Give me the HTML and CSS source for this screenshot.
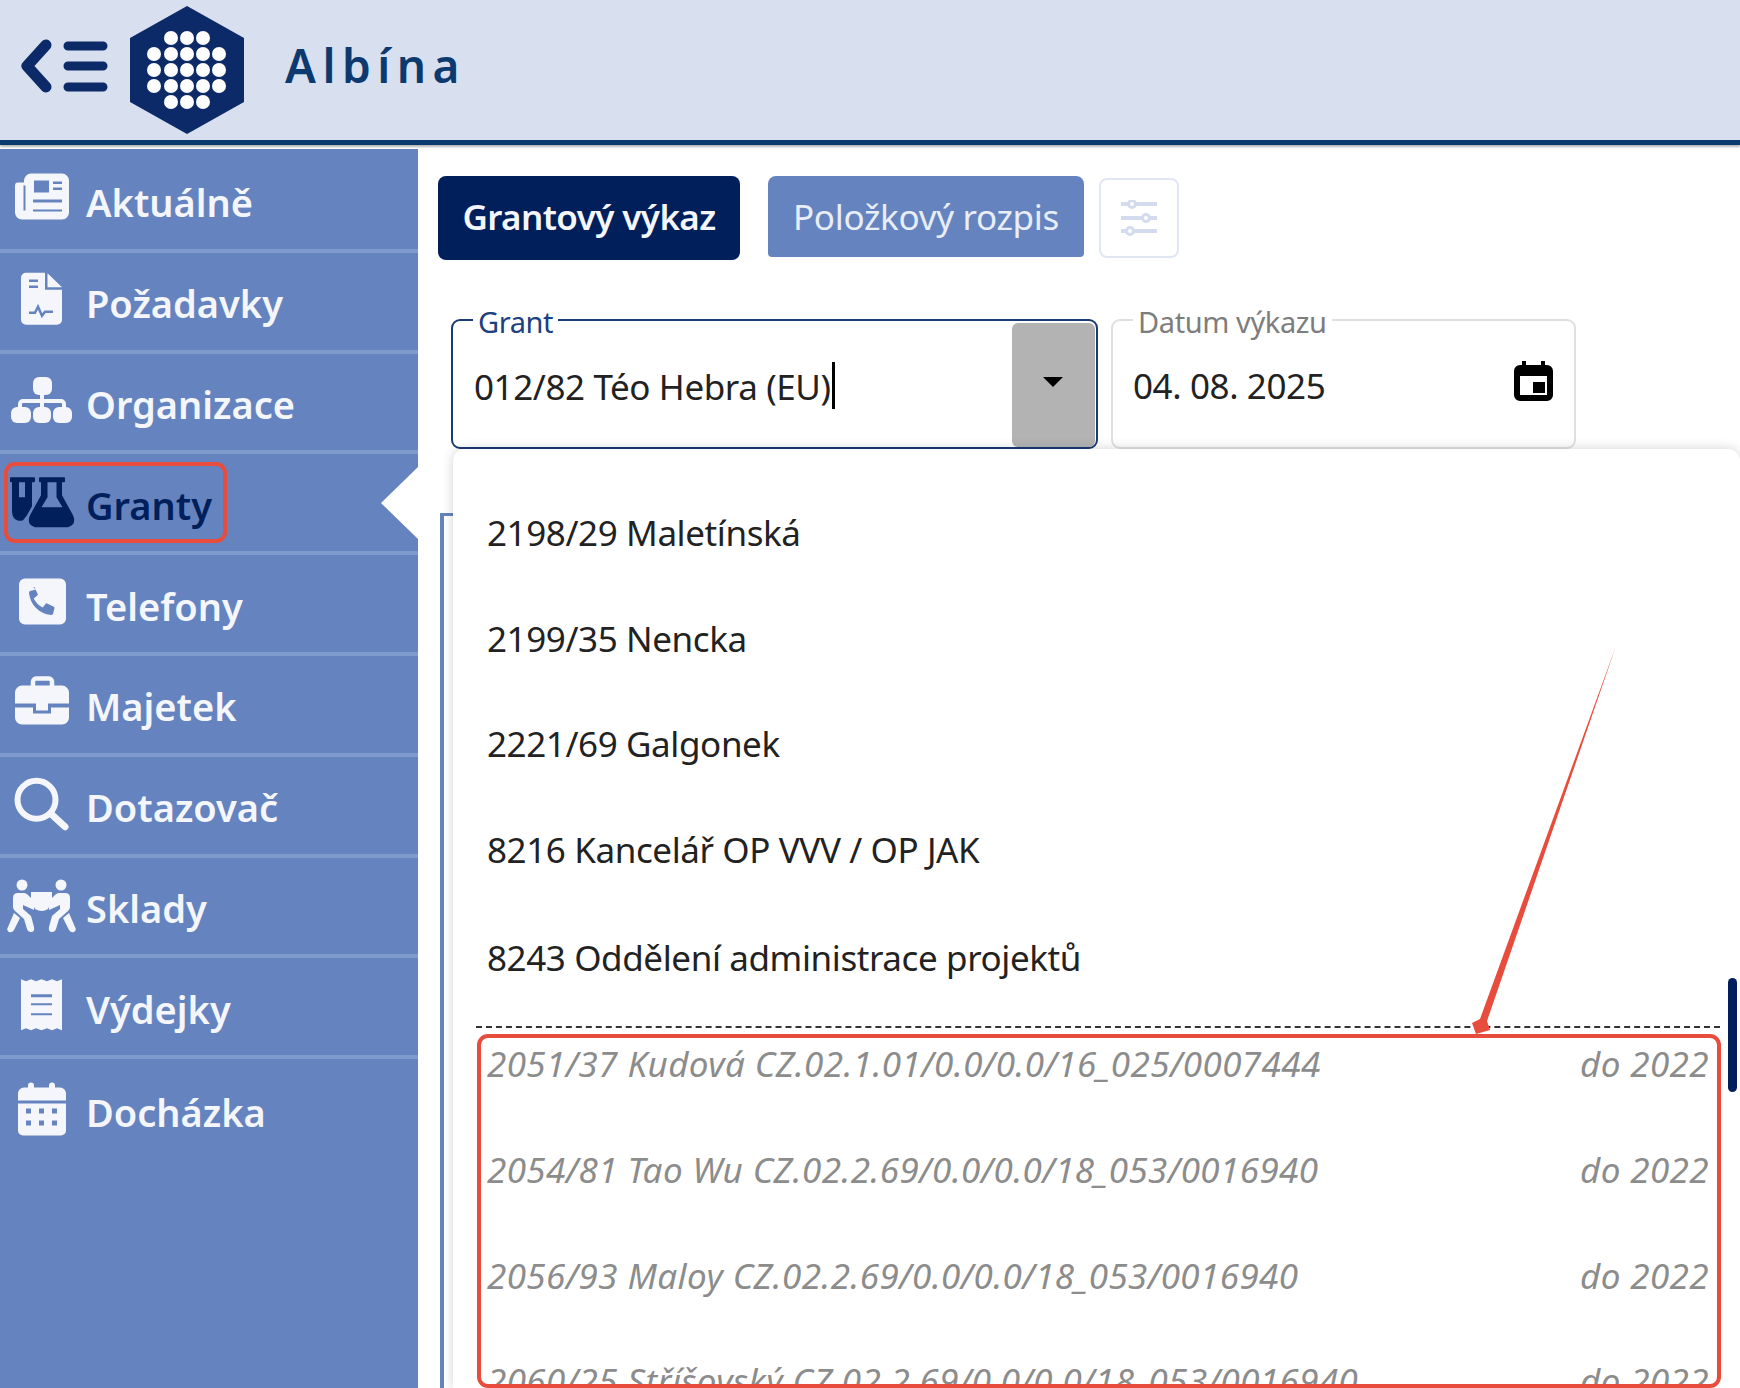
FILE: index.html
```html
<!DOCTYPE html>
<html lang="cs">
<head>
<meta charset="utf-8">
<title>Albína</title>
<link rel="stylesheet" href="styles.css">
</head>
<body>
<header class="topbar">
  <svg class="brand-menu" viewBox="0 0 110 140" aria-hidden="true">
    <path d="M46 45 27 66l19 21" class="brand-stroke chevron"/>
    <path d="M68 46h35M68 66h35M68 87h35" class="brand-stroke"/>
  </svg>
  <svg class="brand-logo" viewBox="130 0 114 140" aria-hidden="true">
    <path class="hex" d="M187 6 244 38v64l-57 32-57-32V38z"/>
    <g class="hex-dots">
      <circle cx="171" cy="38" r="7"/><circle cx="187" cy="38" r="7"/><circle cx="203" cy="38" r="7"/>
      <circle cx="154" cy="54" r="7"/><circle cx="171" cy="54" r="7"/><circle cx="187" cy="54" r="7"/><circle cx="203" cy="54" r="7"/><circle cx="219" cy="54" r="7"/>
      <circle cx="154" cy="70" r="7"/><circle cx="171" cy="70" r="7"/><circle cx="187" cy="70" r="7"/><circle cx="203" cy="70" r="7"/><circle cx="219" cy="70" r="7"/>
      <circle cx="154" cy="86" r="7"/><circle cx="171" cy="86" r="7"/><circle cx="187" cy="86" r="7"/><circle cx="203" cy="86" r="7"/><circle cx="219" cy="86" r="7"/>
      <circle cx="171" cy="102" r="7"/><circle cx="187" cy="102" r="7"/><circle cx="203" cy="102" r="7"/>
    </g>
  </svg>
  <div class="brand-name">Albína</div>
</header>

<div class="layout">
  <nav class="sidebar">
    <a class="nav-row">
      <svg class="nav-icon" viewBox="0 170.400 84 60" aria-hidden="true">
        <path fill-rule="evenodd" d="M24 181a7 7 0 0 1 7-7h31a7 7 0 0 1 7 7v32a7 7 0 0 1-7 7H22a7 7 0 0 1-7-7v-27q0-3 3-3h6zM34 181v12h15v-12zM53 182v2.500h9V182zM53 188v2.500h9V188zM33 200v3h29v-3zM33 210v2h29v-2zM23.500 186v25h2v-25z"/>
      </svg>
      <span class="nav-label">Aktuálně</span>
    </a>
    <a class="nav-row">
      <svg class="nav-icon" viewBox="0 271.200 84 60" aria-hidden="true">
        <path d="M26 273h19v17h17v30a5 5 0 0 1-5 5H26a5 5 0 0 1-5-5v-42a5 5 0 0 1 5-5zM47.500 273.500 62 287.500H47.500z"/>
        <path class="cut-line" d="M29 281h9M29 287h9M29 313h6l3-6 4 9 3-4h8"/>
      </svg>
      <span class="nav-label">Požadavky</span>
    </a>
    <a class="nav-row">
      <svg class="nav-icon" viewBox="0 372 84 60" aria-hidden="true">
        <rect x="33" y="377" width="19" height="18" rx="6"/>
        <rect x="11" y="407" width="20" height="16" rx="6"/>
        <rect x="33" y="407" width="18" height="16" rx="6"/>
        <rect x="53" y="407" width="19" height="16" rx="6"/>
        <path d="M40 392h4v7h17a5 5 0 0 1 5 5v4h-4v-4q0-1-1-1H44v5h-4v-5H23q-1 0-1 1v4h-4v-4a5 5 0 0 1 5-5h17z"/>
      </svg>
      <span class="nav-label">Organizace</span>
    </a>
    <a class="nav-row is-current">
      <svg class="nav-icon" viewBox="0 472.800 84 60" aria-hidden="true">
        <path fill-rule="evenodd" d="M11 477h23a1 1 0 0 1 1 1v3a1 1 0 0 1-1 1h-2v24l-5 9-4 5q-3 1-6 0-5-2-5-9v-29h-1a1 1 0 0 1-1-1v-3a1 1 0 0 1 1-1zM19 482v15h6v-15z"/>
        <path fill-rule="evenodd" d="M41 477h23a1 1 0 0 1 1 1v3a1 1 0 0 1-1 1h-2v13l11 20q4 9-5 12H35q-9-3-5-12l11-20v-13h-1a1 1 0 0 1-1-1v-3a1 1 0 0 1 1-1zM47.500 482v15l-6 10h21l-6-10v-15z"/>
      </svg>
      <span class="nav-label">Granty</span>
    </a>
    <a class="nav-row">
      <svg class="nav-icon" viewBox="0 573.600 84 60" aria-hidden="true">
        <path fill-rule="evenodd" d="M25 578h35a6 6 0 0 1 6 6v34a6 6 0 0 1-6 6H25a6 6 0 0 1-6-6v-34a6 6 0 0 1 6-6zM36 589l-6 1.500q-1 .500-1 2 1 9 7 15t15 7q1.500 0 2-1l1.500-6q0-1-1-1.500l-6.500-3q-1-.400-1.500.500l-2.800 3.500q-6-3-9-9l3.500-2.800q.900-.500.500-1.500l-3-6.500q-.500-1-1.500-.200z"/>
      </svg>
      <span class="nav-label">Telefony</span>
    </a>
    <a class="nav-row">
      <svg class="nav-icon" viewBox="0 674.400 84 60" aria-hidden="true">
        <path class="handle" d="M33 688v-6a3 3 0 0 1 3-3h13a3 3 0 0 1 3 3v6"/>
        <path d="M22 686h40a7 7 0 0 1 7 7v11H48v7H36v-7H15v-11a7 7 0 0 1 7-7z"/>
        <path d="M15 708h18v6h18v-6h18v10a7 7 0 0 1-7 7H22a7 7 0 0 1-7-7z"/>
      </svg>
      <span class="nav-label">Majetek</span>
    </a>
    <a class="nav-row">
      <svg class="nav-icon" viewBox="0 775.200 84 60" aria-hidden="true">
        <circle class="lens" cx="36.500" cy="800" r="19"/>
        <path class="lens-handle" d="M52 815l13 12"/>
      </svg>
      <span class="nav-label">Dotazovač</span>
    </a>
    <a class="nav-row">
      <svg class="nav-icon" viewBox="0 876 84 60" aria-hidden="true">
        <g id="carrier">
          <circle cx="22" cy="885" r="5.500"/>
          <path d="M13 898q0-5 5-5h6q2 0 4 2l6 6v9l-11-5v4l8 7 3 11q1 5-3 5-3 0-4-3l-3-10-9-8q-2-2-2-4z"/>
          <path d="M14 913l6 5-6 12q-2 3-5 2-3-2-1-5z"/>
        </g>
        <use href="#carrier" transform="translate(83 0) scale(-1 1)"/>
        <path d="M31 892h21v8l-4 9q-6 4-13 0l-4-9z"/>
      </svg>
      <span class="nav-label">Sklady</span>
    </a>
    <a class="nav-row">
      <svg class="nav-icon" viewBox="0 976.800 84 60" aria-hidden="true">
        <path fill-rule="evenodd" d="M21 979l5 2 5-2 5 2 5.500-2 5.500 2 5-2 5 2 5-2v51l-5-2-5 2-5-2-5.500 2-5.500-2-5 2-5-2-5 2zM31 994v3h21v-3zM31 1003v2h21v-2zM31 1013v2h21v-2z"/>
      </svg>
      <span class="nav-label">Výdejky</span>
    </a>
    <a class="nav-row">
      <svg class="nav-icon" viewBox="0 1077.600 84 60" aria-hidden="true">
        <path d="M28 1083q0-3 3-3t3 3v2h15v-2q0-3 3-3t3 3v2h5a6 6 0 0 1 6 6v7H18v-7a6 6 0 0 1 6-6h4z"/>
        <path fill-rule="evenodd" d="M18 1101h48v27a5 5 0 0 1-5 5H23a5 5 0 0 1-5-5zM26 1106v5h5v-5zM39 1106v5h5v-5zM52 1106v5h5v-5zM26 1118v5h5v-5zM39 1118v5h5v-5zM52 1118v5h5v-5z"/>
      </svg>
      <span class="nav-label">Docházka</span>
    </a>
  </nav>

  <main class="content">
    <div class="tabs">
      <button class="tab tab-active">Grantový výkaz</button>
      <button class="tab tab-idle">Položkový rozpis</button>
      <button class="tab-settings" aria-label="Nastavení">
        <svg viewBox="0 0 40 36" aria-hidden="true">
          <path d="M2 4h36M2 18h36M2 31h36"/>
          <circle cx="13" cy="4" r="3.500"/><circle cx="27" cy="18" r="3.500"/><circle cx="11" cy="31" r="3.500"/>
        </svg>
      </button>
    </div>
    <div class="fields">
      <div class="field field-grant">
        <span class="field-label">Grant</span>
        <div class="field-value">012/82 Téo Hebra (EU)<i class="caret-bar"></i></div>
        <div class="drop-button"><i class="drop-arrow"></i></div>
      </div>
      <div class="field field-date">
        <span class="field-label">Datum výkazu</span>
        <div class="field-value">04. 08. 2025</div>
        <svg class="date-icon" viewBox="0 0 39 40" aria-hidden="true">
          <path fill-rule="evenodd" d="M8 0h4v4h15V0h4v4h2a6 6 0 0 1 6 6v24a6 6 0 0 1-6 6H6a6 6 0 0 1-6-6V10a6 6 0 0 1 6-6h2zM6 15v19h27V15zM19 21h12v11H19z"/>
        </svg>
      </div>
    </div>
    <div class="report-edge"></div>
  </main>
</div>

<section class="dropdown">
  <ul class="options options-current">
    <li>2198/29 Maletínská</li>
    <li>2199/35 Nencka</li>
    <li>2221/69 Galgonek</li>
    <li>8216 Kancelář OP VVV / OP JAK</li>
    <li>8243 Oddělení administrace projektů</li>
  </ul>
  <div class="options-divider"></div>
  <ul class="options options-old">
    <li><span>2051/37 Kudová CZ.02.1.01/0.0/0.0/16_025/0007444</span><span>do 2022</span></li>
    <li><span>2054/81 Tao Wu CZ.02.2.69/0.0/0.0/18_053/0016940</span><span>do 2022</span></li>
    <li><span>2056/93 Maloy CZ.02.2.69/0.0/0.0/18_053/0016940</span><span>do 2022</span></li>
    <li><span>2060/25 Stříšovský CZ.02.2.69/0.0/0.0/18_053/0016940</span><span>do 2022</span></li>
  </ul>
  <div class="scroll-thumb"></div>
</section>

<div class="mark mark-nav"></div>
<div class="mark mark-list"></div>
<svg class="mark-arrow" viewBox="0 0 1740 1388" aria-hidden="true">
  <path d="M1616 646 1487 1021 1490 1030 1476 1034 1472 1023 1480 1019z"/>
</svg>
</body>
</html>
```
FILE: styles.css
```css
:root {
  --nav: #6584bf;
  --navy: #001f5b;
  --ui-font: "Noto Sans", "Open Sans", sans-serif;
}
* { box-sizing: border-box; }
html, body { margin: 0; height: 100%; }
body {
  position: relative;
  width: 1740px;
  height: 1388px;
  overflow: hidden;
  background: #fff;
  font-family: var(--ui-font);
  color: #222;
}

/* top bar */
.topbar {
  display: flex;
  align-items: flex-start;
  height: 145px;
  background: #d8dfee;
  border-bottom: 5px solid #0a3a6e;
  box-shadow: 0 2px 2px #b5b5b5;
}
.brand-menu { width: 110px; height: 140px; flex: none; }
.brand-stroke { fill: none; stroke: #0c2a68; stroke-width: 9; stroke-linecap: round; stroke-linejoin: round; }
.chevron { stroke-width: 11; }
.brand-logo { width: 114px; height: 140px; margin-left: 20px; flex: none; }
.hex { fill: #0c2a68; }
.hex-dots { fill: #fff; }
.brand-name {
  margin-left: 41px;
  line-height: 130px;
  font-size: 46px;
  font-weight: 600;
  letter-spacing: 6.500px;
  color: #0d3a6e;
}

/* layout */
.layout { display: flex; height: 1239px; margin-top: 4px; }

/* sidebar */
.sidebar {
  position: relative;
  width: 418px;
  flex: none;
  padding-top: 3px;
  background: var(--nav);
}
.nav-row {
  position: relative;
  display: flex;
  align-items: center;
  height: 100.800px;
  border-bottom: 4px solid #7f9acc;
  color: #f4f6fb;
}
.nav-row:last-child { border-bottom: 0; }
.nav-icon { width: 84px; height: 60px; flex: none; margin-right: 2px; fill: currentColor; }
.nav-label {
  padding-top: 4px;
  font-size: 38px;
  font-weight: 600;
  letter-spacing: 0;
}
.is-current { color: var(--navy); }
.is-current::after {
  content: "";
  position: absolute;
  right: 0;
  top: 13px;
  border-style: solid;
  border-width: 36px 37px 36px 0;
  border-color: transparent #fff transparent transparent;
}
.cut-line { fill: none; stroke: var(--nav); stroke-width: 2.500; }
.handle { fill: none; stroke: currentColor; stroke-width: 4.500; }
.lens { fill: none; stroke: currentColor; stroke-width: 6; }
.lens-handle { fill: none; stroke: currentColor; stroke-width: 7; stroke-linecap: round; }

/* content */
.content { position: relative; flex: 1; padding: 27px 0 0 20px; }
.tabs { display: flex; align-items: flex-start; }
.tab {
  border: 0;
  margin: 0;
  padding: 0;
  border-radius: 8px;
  font-family: var(--ui-font);
  font-size: 35px;
  letter-spacing: -.6px;
}
.tab-active { width: 302px; height: 84px; padding-bottom: 4px; background: var(--navy); color: #f4f6fb; font-weight: 600; }
.tab-idle { width: 316px; height: 81px; margin-left: 28px; background: var(--nav); color: #e8edf6; border-radius: 8px 8px 4px 4px; letter-spacing: -.3px; }
.tab-settings {
  width: 80px;
  height: 80px;
  margin: 2px 0 0 15px;
  padding: 0;
  background: #fff;
  border: 2px solid #e0e7f3;
  border-radius: 8px;
  display: flex;
  align-items: center;
  justify-content: center;
}
.tab-settings svg { width: 40px; height: 36px; }
.tab-settings path { fill: none; stroke: #d3dcee; stroke-width: 4; }
.tab-settings circle { fill: #fff; stroke: #d3dcee; stroke-width: 3; }

.fields { display: flex; margin: 59px 0 0 13px; }
.field {
  position: relative;
  height: 130px;
  background: #fff;
  border-radius: 9px;
  padding: 41px 0 0 21px;
}
.field-grant { width: 647px; border: 2px solid #1a3a78; }
.field-date { width: 465px; margin-left: 13px; padding-left: 20px; border: 2px solid #e0e0e0; }
.field-label {
  position: absolute;
  top: -17px;
  left: 20px;
  padding: 0 5px;
  background: #fff;
  font-size: 29px;
  line-height: 36px;
  letter-spacing: -.4px;
  color: #1d4080;
}
.field-date .field-label { color: #7d7d7d; }
.field-value {
  position: relative;
  font-size: 35px;
  line-height: 48px;
  letter-spacing: -.4px;
  color: #222;
}
.caret-bar {
  display: inline-block;
  width: 3px;
  height: 47px;
  margin-left: 1px;
  background: #000;
  vertical-align: -9px;
}
.drop-button {
  position: absolute;
  top: 2px;
  right: 1px;
  bottom: 0;
  width: 83px;
  background: #b3b3b3;
  border-radius: 6px;
}
.drop-arrow {
  position: absolute;
  top: 54px;
  left: 31px;
  border-style: solid;
  border-width: 10px 10px 0;
  border-color: #000 transparent transparent;
}
.date-icon { position: absolute; top: 40px; right: 21px; width: 39px; height: 40px; }
.report-edge {
  margin: 64px 0 0 2px;
  height: 900px;
  border-top: 3px solid var(--nav);
  border-left: 4px solid var(--nav);
}

/* open drop-down list, lies over the form */
.dropdown {
  position: absolute;
  left: 453px;
  right: 0;
  top: 449px;
  bottom: 0;
  padding: 63px 31px 0 34px;
  background: #fff;
  border-radius: 12px 12px 0 0;
  box-shadow: 0 0 12px rgba(0, 0, 0, .18);
  overflow: hidden;
}
.options {
  list-style: none;
  margin: 0;
  padding: 0;
  display: flex;
  flex-direction: column;
  gap: 63.600px;
  font-size: 35px;
  line-height: 42px;
  letter-spacing: -.4px;
  color: #222;
}
.options-current li:last-child { margin-top: 3px; }
.options-divider { margin: 47px -11px 15px -11px; border-top: 2px dashed #333; }
.options-old { color: #8c8c8c; font-style: italic; letter-spacing: .4px; }
.options-old li { display: flex; justify-content: space-between; }
.scroll-thumb {
  position: absolute;
  top: 529px;
  right: 3px;
  width: 9px;
  height: 114px;
  border-radius: 5px;
  background: var(--navy);
}

/* red review marks over the screenshot */
.mark { position: absolute; border: 4px solid #e74c3c; border-radius: 11px; }
.mark-nav { left: 4px; top: 462px; width: 223px; height: 81px; }
.mark-list { left: 477px; top: 1034px; width: 1244px; height: 354px; }
.mark-arrow { position: absolute; inset: 0; width: 1740px; height: 1388px; fill: #e74c3c; pointer-events: none; }
```
